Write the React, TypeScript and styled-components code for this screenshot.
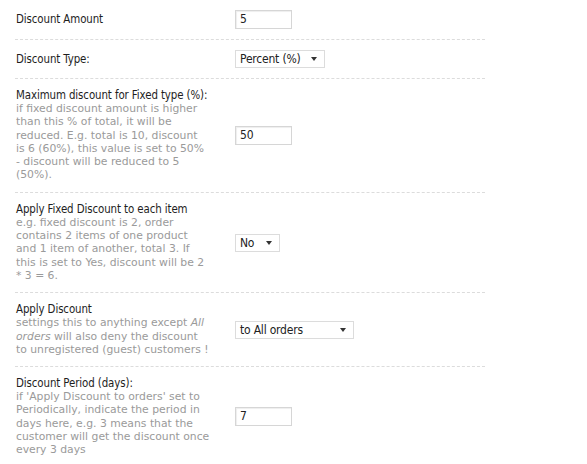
import React from 'react'
import styled, { createGlobalStyle } from 'styled-components'

const GlobalStyle = createGlobalStyle`
  html, body {
    margin: 0;
    padding: 0;
    background: #fff;
  }
`

const Form = styled.div`
  width: 470px;
  margin-left: 15px;
`

const Row = styled.div`
  display: flex;
  align-items: center;
  padding: 10px 0;
  border-bottom: 1px dashed #dcdcdc;

  &:last-child {
    border-bottom: none;
  }
`

const LabelCell = styled.div`
  width: 219px;
  flex-shrink: 0;
  padding-left: 1px;
`

const Label = styled.div`
  font-family: 'DejaVu Sans Condensed', 'DejaVu Sans', sans-serif;
  font-size: 11.4px;
  line-height: 13px;
  letter-spacing: -0.1px;
  color: #1e1e1e;
`

const Hint = styled.div`
  font-family: 'DejaVu Sans', Verdana, sans-serif;
  font-size: 10.8px;
  line-height: 13.3px;
  color: #9a9a9a;
  white-space: nowrap;

  em {
    font-style: italic;
  }
`

const HintLine = styled.span`
  display: block;
`

const TextBox = styled.div`
  box-sizing: border-box;
  width: 57px;
  height: 19px;
  padding: 0 4px;
  border: 1px solid #d6d6d6;
  box-shadow: inset 1px 1px 1px #eee;
  font-family: 'DejaVu Sans Condensed', 'DejaVu Sans', sans-serif;
  font-size: 12px;
  line-height: 17px;
  color: #222;
`

const Select = styled.div<{ w: number }>`
  box-sizing: border-box;
  width: ${({ w }) => w}px;
  height: 18px;
  padding: 0 4px;
  border: 1px solid #dcdcdc;
  display: flex;
  align-items: center;
  justify-content: space-between;
  font-family: 'DejaVu Sans Condensed', 'DejaVu Sans', sans-serif;
  font-size: 12px;
  letter-spacing: -0.2px;
  color: #222;
`

const Arrow = styled.span`
  width: 0;
  height: 0;
  border-left: 3.5px solid transparent;
  border-right: 3.5px solid transparent;
  border-top: 4px solid #333;
  margin-right: 3px;
`

const Field: React.FC<{ label: string; hint?: React.ReactNode[]; children: React.ReactNode }> = ({
  label,
  hint,
  children,
}) => (
  <Row>
    <LabelCell>
      <Label>{label}</Label>
      {hint && (
        <Hint>
          {hint.map((line, i) => (
            <HintLine key={i}>{line}</HintLine>
          ))}
        </Hint>
      )}
    </LabelCell>
    {children}
  </Row>
)

export default function App() {
  return (
    <>
      <GlobalStyle />
      <Form>
        <Field label="Discount Amount">
          <TextBox>5</TextBox>
        </Field>
        <Field label="Discount Type:">
          <Select w={90}>
            Percent (%) <Arrow />
          </Select>
        </Field>
        <Field
          label="Maximum discount for Fixed type (%):"
          hint={[
            'if fixed discount amount is higher',
            'than this % of total, it will be',
            'reduced. E.g. total is 10, discount',
            'is 6 (60%), this value is set to 50%',
            '- discount  will be reduced to 5',
            '(50%).',
          ]}
        >
          <TextBox>50</TextBox>
        </Field>
        <Field
          label="Apply Fixed Discount to each item"
          hint={[
            'e.g. fixed discount is 2, order',
            'contains 2 items of one product',
            'and 1 item of another, total 3. If',
            'this is set to Yes, discount will be 2',
            '* 3 = 6.',
          ]}
        >
          <Select w={45}>
            No <Arrow />
          </Select>
        </Field>
        <Field
          label="Apply Discount"
          hint={[
            <>
              settings this to anything except <em>All</em>
            </>,
            <>
              <em>orders</em> will also deny the discount
            </>,
            'to unregistered (guest) customers !',
          ]}
        >
          <Select w={119}>
            to All orders <Arrow />
          </Select>
        </Field>
        <Field
          label="Discount Period (days):"
          hint={[
            "if 'Apply Discount to orders' set to",
            'Periodically, indicate the period in',
            'days here, e.g. 3 means that the',
            'customer will get the discount once',
            'every 3 days',
          ]}
        >
          <TextBox>7</TextBox>
        </Field>
      </Form>
    </>
  )
}
